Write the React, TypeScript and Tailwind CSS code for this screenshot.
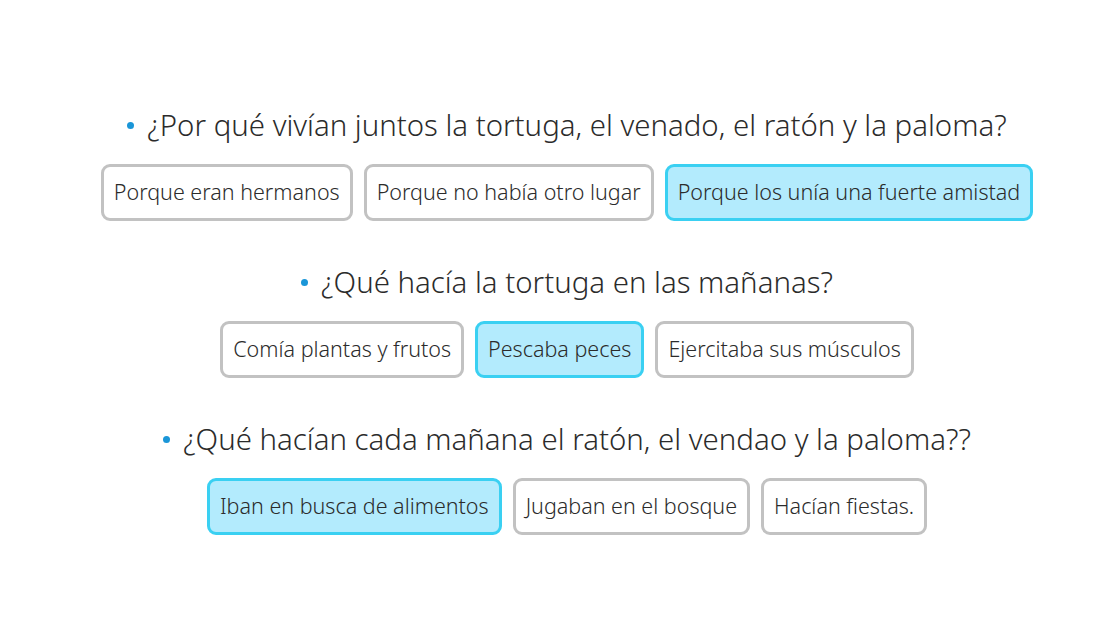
import React from "react";

const questions = [
  {
    id: 1,
    title: "¿Por qué vivían juntos la tortuga, el venado, el ratón y la paloma?",
    options: ["Porque eran hermanos", "Porque no había otro lugar", "Porque los unía una fuerte amistad"],
    selected: 2,
  },
  {
    id: 2,
    title: "¿Qué hacía la tortuga en las mañanas?",
    options: ["Comía plantas y frutos", "Pescaba peces", "Ejercitaba sus músculos"],
    selected: 1,
  },
  {
    id: 3,
    title: "¿Qué hacían cada mañana el ratón, el vendao y la paloma??",
    options: ["Iban en busca de alimentos", "Jugaban en el bosque", "Hacían fiestas."],
    selected: 0,
  },
];

export default function App() {
  return (
    <div
      className="w-full min-h-[644px] bg-white flex flex-col items-center pt-[104px] pl-[16px] text-[#2b2b2b]"
      style={{ fontFamily: '"Segoe UI", "Noto Sans", "Open Sans", sans-serif' }}
    >
      {questions.map((q) => (
        <div key={q.id} className="flex flex-col items-center mb-[40px]">
          <div className="flex items-center gap-[13px] h-[42px]">
            <span className="w-[7px] h-[7px] rounded-full bg-[#1a96d8]" />
            <p className="text-[29.4px] leading-[42px] font-light">{q.title}</p>
          </div>
          <div className="flex gap-[11px] mt-[18px]">
            {q.options.map((opt, i) => (
              <div
                key={opt}
                className={
                  i === q.selected
                    ? "h-[57px] px-[10px] flex items-center rounded-[9px] border-[3px] border-[#3ad0f2] bg-[#b3ebfd] text-[21.5px] font-[350]"
                    : "h-[57px] px-[10px] flex items-center rounded-[9px] border-[3px] border-[#c2c2c2] bg-white text-[21.5px] font-[350]"
                }
              >
                {opt}
              </div>
            ))}
          </div>
        </div>
      ))}
    </div>
  );
}
